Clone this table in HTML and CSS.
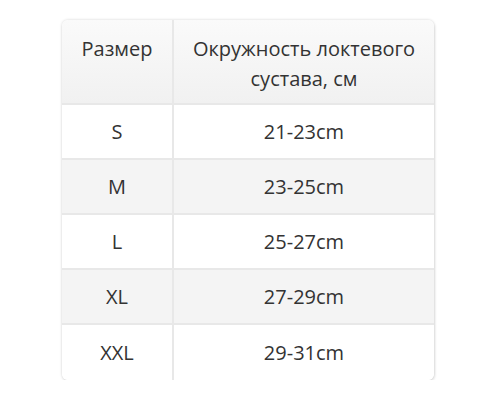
FILE: index.html
```html
<!DOCTYPE html>
<html lang="ru">
<head>
<meta charset="utf-8">
<link rel="stylesheet" href="styles.css">
</head>
<body>
<div class="wrap">
  <table class="sizes">
    <colgroup><col class="col1"><col class="col2"></colgroup>
    <thead>
      <tr><th>Размер</th><th>Окружность локтевого сустава, см</th></tr>
    </thead>
    <tbody>
      <tr><td>S</td><td>21-23cm</td></tr>
      <tr class="alt"><td>M</td><td>23-25cm</td></tr>
      <tr><td>L</td><td>25-27cm</td></tr>
      <tr class="alt"><td>XL</td><td>27-29cm</td></tr>
      <tr><td>XXL</td><td>29-31cm</td></tr>
    </tbody>
  </table>
</div>
</body>
</html>
```
FILE: styles.css
```css
html, body { margin: 0; padding: 0; background: #fff; }
body { font-family: "Open Sans", "Liberation Sans", sans-serif; color: #333; }
.wrap { padding: 20px 0 0 62px; }
.sizes {
  width: 372px;
  table-layout: fixed;
  border-collapse: separate;
  border-spacing: 0;
  border-radius: 6px;
  box-shadow: 0 0 3px rgba(0,0,0,0.18), 1px 2px 3px rgba(0,0,0,0.08);
  overflow: hidden;
  font-size: 20px;
}
.col1 { width: 112px; }
.col2 { width: 260px; }
.sizes th, .sizes td {
  text-align: center;
  font-weight: normal;
  padding: 0 6px;
  border-bottom: 2px solid #e8e8e8;
}
.sizes th {
  height: 85px;
  box-sizing: border-box;
  padding-top: 14px;
  vertical-align: top;
  line-height: 30px;
  background: linear-gradient(#fafafa, #f1f1f1);
}
.sizes td { height: 53px; background: #fff; }
.sizes tr.alt td { background: #f4f4f4; }
.sizes tbody tr:last-child td { border-bottom: none; height: 55px; }
.sizes th:first-child, .sizes td:first-child { border-right: 2px solid #e8e8e8; }
```
